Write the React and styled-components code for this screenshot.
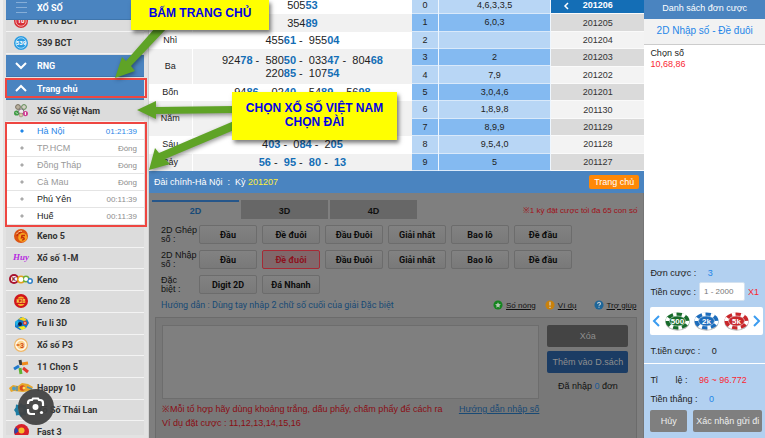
import React from "react";
import styled, { createGlobalStyle } from "styled-components";

const colors = {
  blue: "#4a84c0",
  deepBlue: "#146eb6",
  lightBlue: "#b8d6f5",
  midBlue: "#84baf1",
  panelBlue: "#b2d0f0",
  link: "#1f86e8",
  red: "#fa2732",
  dim: "#7f7f7f",
};

const GlobalStyle = createGlobalStyle`
  * { box-sizing: border-box; }
  body {
    margin: 0;
    background: #ececec;
    color: #222;
    font-family: "Liberation Sans", Arial, sans-serif;
    font-size: 9px;
    overflow: hidden;
  }
  button, input, textarea { font: inherit; margin: 0; }
  a { color: inherit; }
  table { border-collapse: collapse; }
  p, h2, ul { margin: 0; padding: 0; }
`;

const Page = styled.div`
  position: relative;
  display: flex;
  height: 100vh;
  overflow: hidden;
`;

/* ---------- sidebar ---------- */

const Sidebar = styled.nav`
  flex: 0 0 149px;
  padding: 0 4px 3px 6px;
  background: linear-gradient(90deg, #efefef 3px, #e2e2e2 3px);
  border-right: 1px solid #d2d2d2;
  overflow: hidden;
`;

const SidebarBody = styled.div`
  height: 100%;
  overflow: hidden;
`;

const MenuLink = styled.a`
  display: flex;
  align-items: center;
  gap: 5px;
  height: 22px;
  flex-shrink: 0;
  background: #dcdcdc;
  border-bottom: 1px solid #f3f3f3;
  color: #333;
  font-family: Roboto, "Liberation Sans", sans-serif;
  font-size: 9px;
  font-weight: 700;
  text-decoration: none;
  white-space: nowrap;
`;

const GroupLink = styled(MenuLink)`
  margin-top: 1px;
  background: ${colors.blue};
  border-bottom-color: #3f76ad;
  color: #fff;
`;

const HeadLink = styled(GroupLink)`
  height: 20px;
  margin-top: 0;
  padding-bottom: 3px;
`;

const CutRow = styled.div`
  display: flex;
  flex-direction: column;
  justify-content: flex-end;
  height: 12px;
  overflow: hidden;
`;

const IconSlot = styled.span`
  display: flex;
  justify-content: center;
  flex: 0 0 26px;
  min-width: 0;
  padding-left: 4px;

  svg {
    flex-shrink: 0;
    overflow: visible;
  }
`;

const CityList = styled.ul`
  padding: 1px 0;
  background: #fff;
  list-style: none;
`;

const City = styled.li`
  display: flex;
  align-items: center;
  height: 17px;
  padding: 0 7px 0 14px;
  border-bottom: 1px solid #e4e4e4;
  color: ${({ $tone }) => $tone || "#999"};

  a {
    flex: 1;
    margin-left: 13px;
    text-decoration: none;
  }

  time, small {
    font-size: 8px;
    color: ${({ $active }) => ($active ? colors.link : "#8d8d8d")};
  }
`;

const Bullet = styled.i`
  width: 4px;
  height: 4px;
  background: ${({ $active }) => ($active ? colors.link : "#aaa")};
  clip-path: polygon(50% 0, 100% 50%, 50% 100%, 0 50%);
`;

const GameList = styled.div`
  display: grid;
  grid-template-rows: repeat(10, 1fr);
  height: 217px;

  a { height: auto; }
`;

/* ---------- results ---------- */

const Main = styled.main`
  display: flex;
  flex-direction: column;
  flex: 1;
  min-width: 0;
`;

const Results = styled.section`
  display: flex;
  align-items: flex-end;
  height: 171px;
  overflow: hidden;
`;

const PrizeTable = styled.table`
  flex: 1;
  height: 174px;
  background: #fff;
  font-size: 11px;
  line-height: 13px;

  th, td { padding: 0; text-align: center; }
  tr:nth-child(even) { background: #f1f1f1; }
  th {
    width: 43px;
    border-right: 1px solid #fff;
    font-size: 9px;
    font-weight: 400;
  }
  td { white-space: pre; }
  b { color: ${colors.deepBlue}; }
`;

const PrizeRow = styled.tr`
  height: ${({ $tall }) => ($tall ? "34px" : "17px")};
`;

const DigitTable = styled.table`
  width: 139px;
  height: 174px;
  background: ${colors.lightBlue};

  tr:nth-child(even) { background: ${colors.midBlue}; }
  tr { border-bottom: 1px solid #d9e9fa; }
  th, td {
    padding: 0;
    border-right: 1px solid #eef6fe;
    font-weight: 400;
    text-align: center;
  }
  th { width: 26px; }
`;

const DrawList = styled.div`
  display: grid;
  grid-template-rows: repeat(10, 1fr);
  width: 93px;
  height: 174px;
`;

const Draw = styled.button`
  position: relative;
  padding: 0;
  border: 0;
  border-bottom: 1px solid #fafafa;
  background: #f3f3f3;
  color: #333;

  &:nth-child(even) { background: #dadada; }

  &[aria-current] {
    background: ${colors.deepBlue};
    color: #fff;
    font-weight: 700;
  }

  svg {
    position: absolute;
    left: 12px;
    top: 5px;
  }
`;

/* ---------- betting board ---------- */

const GameBar = styled.header`
  display: flex;
  align-items: center;
  justify-content: space-between;
  height: 22px;
  padding: 0 5px;
  background: ${colors.blue};
  color: #fff;
  white-space: pre;

  span { color: #ffee3c; }
`;

const HomeButton = styled.button`
  height: 14px;
  padding: 0 5px;
  border: 0;
  border-radius: 2px;
  background: #ff8806;
  color: #fff;
`;

const Board = styled.section`
  flex: 1;
  display: flex;
  flex-direction: column;
  padding: 7px 3px 0;
  background: ${colors.dim};
  border-right: 1px solid #757575;
  color: #111;
  overflow: hidden;
`;

const Tabs = styled.div`
  display: flex;
  gap: 2px;
  height: 19px;
  align-items: center;

  p {
    margin-left: auto;
    padding-right: 3px;
    color: #a01018;
    font-size: 8px;
    white-space: nowrap;
  }
`;

const Tab = styled.button`
  width: 87px;
  height: 19px;
  padding: 0;
  border: 0;
  border-top: 2px solid ${({ $active }) => ($active ? "#26568a" : "#676767")};
  background: ${({ $active }) => ($active ? colors.dim : "#676767")};
  color: ${({ $active }) => ($active ? "#174a78" : "#111")};
  font-weight: 700;
`;

const BetRows = styled.div`
  display: flex;
  flex-direction: column;
  gap: 6px;
  padding: 6px 9px 0;
`;

const BetRow = styled.div`
  display: flex;
  align-items: center;
  gap: 5px;
  height: 19px;

  span {
    width: 33px;
    line-height: 9px;
    white-space: pre;
  }
`;

const BetButton = styled.button`
  width: 58px;
  height: 19px;
  padding: 0;
  border: 1px solid ${({ $picked }) => ($picked ? "#a52a35" : "#6c6c6c")};
  border-radius: 2px;
  background: ${({ $picked }) =>
    $picked ? "#80686b" : "linear-gradient(#828282, #797979)"};
  color: ${({ $picked }) => ($picked ? "#8c121e" : "#0c0c0c")};
  font-family: Roboto, "Liberation Sans", sans-serif;
  font-weight: 700;
  white-space: nowrap;
`;

const GuideRow = styled.div`
  display: flex;
  align-items: center;
  gap: 9px;
  padding: 0 4px 0 9px;
  height: 22px;
  font-size: 8px;
  white-space: nowrap;

  p {
    flex: 1;
    color: #184a75;
    font-family: Roboto, "Liberation Sans", sans-serif;
    font-size: 9px;
  }

  a:last-child { margin-left: 8px; }
`;

const HelpLink = styled.a`
  display: flex;
  align-items: center;
  gap: 3px;
  color: #111;
`;

const EntryBox = styled.div`
  display: flex;
  flex: 1;
  gap: 8px;
  margin: 1px 3px 0;
  padding: 7px 8px 0 6px;
  border: 1px solid #6b6b6b;
  border-bottom: 0;
  background: #787878;
`;

const EntryColumn = styled.div`
  flex: 1;
  min-width: 0;
`;

const NumberArea = styled.textarea`
  display: block;
  width: 100%;
  height: 74px;
  border: 1px solid #6d6d6d;
  background: ${colors.dim};
  resize: none;
`;

const Hint = styled.div`
  display: flex;
  justify-content: space-between;
  padding-top: 3px;
  line-height: 14px;
  color: #8a0d14;
  white-space: nowrap;

  a { color: #184a75; }
`;

const EntryActions = styled.div`
  display: flex;
  flex-direction: column;
  gap: 4px;
  flex: 0 0 81px;
  text-align: center;

  p { padding-top: 4px; white-space: nowrap; }
  p b { color: #1b5a99; font-weight: 400; }
`;

const ActionButton = styled.button`
  height: 22px;
  padding: 0;
  border: 0;
  border-radius: 2px;
  background: ${({ $primary }) => ($primary ? "#1b3c64" : "#444")};
  color: #8e8e8e;
  white-space: nowrap;
`;

/* ---------- bet slip ---------- */

const Slip = styled.aside`
  display: flex;
  flex-direction: column;
  flex: 0 0 120px;
  background: #fff;
`;

const SlipHead = styled.h2`
  height: 19px;
  background: ${colors.blue};
  color: #fff;
  font-size: 9px;
  font-weight: 400;
  line-height: 17px;
  text-align: center;
  white-space: nowrap;
`;

const SlipTitle = styled.p`
  height: 26px;
  background: #f2f2f2;
  border-bottom: 1px solid #ccc;
  color: ${colors.link};
  font-size: 10px;
  line-height: 24px;
  text-align: center;
  white-space: nowrap;
`;

const SlipBody = styled.div`
  flex: 1;
  padding: 3px 6px;
  line-height: 11px;

  p:last-child { color: ${colors.red}; }
`;

const SlipFoot = styled.form`
  display: flex;
  flex-direction: column;
  height: 178px;
  background: ${colors.panelBlue};
  white-space: pre;
`;

const SlipLine = styled.div`
  display: flex;
  align-items: center;
  gap: ${({ $gap }) => $gap || "9px"};
  height: 19px;
  padding: 0 6px;

  b { color: ${({ $tone }) => $tone || colors.link}; font-weight: 400; }
`;

const RateLine = styled(SlipLine)`
  margin-top: 6px;
`;

const SlipTop = styled.div`
  height: 104px;
  padding-top: 3px;
  border-bottom: 1px solid #fff;
`;

const AmountInput = styled.input`
  width: 46px;
  height: 19px;
  padding: 0 4px;
  border: 1px solid #d4e2f0;
  border-radius: 2px;
  background: #fff;
  font-size: 8px;

  &::placeholder { color: #777; opacity: 1; }
`;

const Chips = styled.div`
  display: flex;
  align-items: center;
  justify-content: space-between;
  height: 28px;
  margin: 6px 2px 6px 6px;
  padding: 0 2px;
  border-radius: 2px;
  background: #fff;
`;

const ChipButton = styled.button`
  display: flex;
  padding: 0;
  border: 0;
  background: none;
`;

const SlipButtons = styled.div`
  display: flex;
  gap: 6px;
  padding: 2px 3px 0 6px;
`;

const SlipButton = styled.button`
  flex: ${({ $wide }) => ($wide ? 1 : "0 0 37px")};
  height: 22px;
  padding: 0;
  border: 0;
  border-radius: 2px;
  background: #7f7f7f;
  color: #eee;
  font-size: 9px;
  white-space: nowrap;
`;

/* ---------- callouts ---------- */

const Callout = styled.div`
  position: absolute;
  left: ${({ $left }) => $left};
  top: ${({ $top }) => $top};
  width: ${({ $width }) => $width};
  padding: ${({ $pad }) => $pad};
  background: #ff0;
  box-shadow: 2px 3px 4px rgba(0, 0, 0, 0.5);
  color: #0202e6;
  font-size: 12px;
  font-weight: 700;
  line-height: 14px;
  text-align: center;
  white-space: nowrap;
`;

const Frame = styled.div`
  position: absolute;
  left: 5px;
  top: ${({ $top }) => $top};
  width: 142px;
  height: ${({ $height }) => $height};
  border: 2px solid #ee4641;
  pointer-events: none;
`;

const Arrows = styled.svg`
  position: absolute;
  left: 0;
  top: 0;
  pointer-events: none;
  filter: drop-shadow(1px 2px 2px rgba(0, 0, 0, 0.4));
`;

const LensButton = styled.button`
  position: absolute;
  left: 18px;
  top: 389px;
  display: grid;
  place-items: center;
  width: 36px;
  height: 36px;
  padding: 0;
  border: 0;
  border-radius: 50%;
  background: rgba(66, 66, 66, 0.94);
`;

/* ---------- icons ---------- */

const Chevron = ({ d, w = 12, h = 7, color = "#fff", stroke = 2 }) => (
  <svg width={w} height={h} viewBox={`0 0 ${w} ${h}`} fill="none" stroke={color} strokeWidth={stroke}>
    <path d={d} />
  </svg>
);

const Ball = ({ fill, ring, label, text = "#fff" }) => (
  <svg width="14" height="14" viewBox="0 0 14 14">
    <circle cx="7" cy="7" r="7" fill={fill} />
    <circle cx="7" cy="7" r="5.2" fill="none" stroke={ring} strokeWidth="1" />
    <text x="7" y="9" textAnchor="middle" fontSize="6" fontWeight="700" fill={text}>{label}</text>
  </svg>
);

const icons = {
  menu: (
    <svg width="11" height="12" viewBox="0 0 11 12" stroke="#86aed8">
      <path d="M0 .5h11M0 5.5h11M0 10.5h11" />
    </svg>
  ),
  pk10: <Ball fill="#d62f35" ring="#f3aaaa" label="10" />,
  b539: <Ball fill="#2b9be0" ring="#9ad6fa" label="539" />,
  vietnam: (
    <svg width="14" height="13" viewBox="0 0 14 13">
      <circle cx="4" cy="3" r="2.4" fill="#b9b09f" stroke="#77705f" />
      <circle cx="10" cy="3" r="2.4" fill="#d4d0c6" stroke="#5d8a54" />
      <circle cx="2.6" cy="9" r="2.6" fill="#3f9b44" />
      <circle cx="7.2" cy="7.5" r="2.6" fill="#eee" stroke="#786d76" />
      <circle cx="11.4" cy="9.6" r="2.6" fill="#cf3e93" />
      <circle cx="7" cy="11" r="1.9" fill="#d8c7a3" stroke="#8b8174" strokeWidth=".6" />
      <path d="M11.4 8v3M2 8.4l1.4 1.4" stroke="#fff" />
    </svg>
  ),
  keno5: (
    <svg width="14" height="14" viewBox="0 0 14 14">
      <circle cx="7" cy="7" r="7" fill="#dc5412" />
      <circle cx="8.6" cy="8.4" r="4.4" fill="#f9a420" />
      <path d="M3 7l1-4h4M5 4.5l3-2M11 6.5H8l-.5 2.2c3-.8 4 2.3.4 2.4" fill="none" stroke="#c62f07" strokeWidth="1.4" />
      <path d="M2.6 5.2c1-2 3-3.4 5.4-3" fill="none" stroke="#ffd89a" />
    </svg>
  ),
  huy: (
    <svg width="16" height="12" viewBox="0 0 16 12">
      <text x="8" y="8" textAnchor="middle" fontFamily="Liberation Serif" fontStyle="italic" fontWeight="700" fontSize="9" fill="#b72ae0">Huy</text>
    </svg>
  ),
  keno: (
    <svg width="24" height="11" viewBox="0 0 24 11">
      <circle cx="5" cy="5" r="5" fill="#a8122e" />
      <circle cx="12" cy="5.5" r="4" fill="#e3a21a" />
      <circle cx="17" cy="5" r="3.6" fill="#6cae35" />
      <circle cx="21" cy="7" r="3" fill="#2b7fc7" />
      <g fill="#fff" fontSize="6" fontWeight="700" textAnchor="middle">
        <circle cx="5" cy="5" r="3" />
        <circle cx="12" cy="5.5" r="2.4" />
        <circle cx="17" cy="5" r="2" />
        <circle cx="21" cy="7" r="1.5" />
        <text x="5" y="7.2" fill="#7a1026">K</text>
      </g>
    </svg>
  ),
  keno28: (
    <svg width="14" height="14" viewBox="0 0 14 14">
      <circle cx="7" cy="7" r="7" fill="#d0161b" />
      <path d="M3.5 4.5a4.2 4.2 0 0 1 7 0zM3.5 10a4.2 4.2 0 0 0 7 0z" fill="#f3b629" />
      <text x="7" y="9.2" textAnchor="middle" fontSize="5" fontWeight="700" fill="#ffe14d">K28</text>
    </svg>
  ),
  fuli: (
    <svg width="15" height="13" viewBox="0 0 15 13">
      <path d="M1 5L7 0l6 2 2 4-3 5-6 2-5-3z" fill="#1478c8" />
      <path d="M4 2l5-2 4 3-3 1z" fill="#f6d51d" />
      <path d="M4 10l4 3 4-2-2-2z" fill="#f4ee1b" />
      <path d="M1 5l3-2 1 3-3 3z" fill="#23b4e6" />
      <circle cx="6" cy="7" r="2" fill="#121a3c" />
      <circle cx="11" cy="6" r="2" fill="#e53b20" />
      <circle cx="11" cy="6" r=".8" fill="#fff" />
    </svg>
  ),
  p3: (
    <svg width="14" height="14" viewBox="0 0 14 14">
      <circle cx="7" cy="7" r="6.4" fill="#fff8ec" stroke="#efb766" strokeWidth="1.2" />
      <circle cx="7" cy="7" r="4.2" fill="#fbd490" />
      <text x="8" y="9.6" textAnchor="middle" fontSize="7" fontWeight="700" fill="#d54a14">3</text>
      <path d="M2.5 7h3" stroke="#dc641c" strokeWidth="1.6" />
    </svg>
  ),
  chon5: (
    <svg width="15" height="14" viewBox="0 0 15 14" strokeWidth="3">
      <path d="M6 0l1 5" stroke="#3b3b3b" />
      <path d="M8 4l6-1" stroke="#f08a1b" />
      <path d="M9 8l5 4" stroke="#e2382e" />
      <path d="M6 8l1 6" stroke="#5cb335" />
      <path d="M0 9l5-3" stroke="#2079cc" />
    </svg>
  ),
  happy: (
    <svg width="25" height="10" viewBox="0 0 25 10">
      <path d="M0 5l4-3 5 1 4-3 6 1 5 3-2 4-8 1-9-1-3 1z" fill="#e7a72c" />
      <circle cx="5" cy="5.5" r="2" fill="#4b9cc9" />
      <circle cx="13.5" cy="5" r="2.8" fill="#d94a1d" />
      <circle cx="15" cy="5" r="1.5" fill="#ffe05c" />
      <path d="M18 4l5 2M8 3v5" stroke="#4d8eb1" strokeWidth="1.4" />
    </svg>
  ),
  thai: (
    <svg width="14" height="14" viewBox="0 0 14 14">
      <path d="M7 0l2 2 3-.5.3 3L14 7l-1.7 2.500-.3 3-3-.5-2 2-2-2-3 .5-.3-3L0 7l1.700-2.500.3-3L5 2z" fill="#1e7da3" />
      <circle cx="7" cy="7" r="2.6" fill="#74bdd5" />
    </svg>
  ),
  fast3: (
    <svg width="15" height="15" viewBox="0 0 15 15">
      <circle cx="7.5" cy="7.5" r="7.5" fill="#d8202b" />
      <path d="M1 10a6.5 6.5 0 0 1 1-7l3 4z" fill="#2c45a9" />
      <circle cx="7.5" cy="6.5" r="3" fill="#f6bb29" />
      <path d="M3 11h9l-2 3H5z" fill="#fff" />
    </svg>
  ),
};

const HelpIcon = ({ fill, children }) => (
  <svg width="10" height="10" viewBox="0 0 11 11">
    <circle cx="5.5" cy="5.5" r="5" fill={fill} />
    {children}
  </svg>
);

const Chip = ({ color, label }) => (
  <svg width="25" height="19" viewBox="0 0 25 19">
    <ellipse cx="12.5" cy="10.5" rx="12" ry="8.3" fill="#bbb" />
    <ellipse cx="12.5" cy="9" rx="12" ry="8.5" fill={color} />
    <ellipse cx="12.5" cy="9" rx="10" ry="6.8" fill="none" stroke="#fff" strokeWidth="4" strokeDasharray="3.5 5.3" />
    <ellipse cx="12.5" cy="9" rx="8" ry="5" fill={color} stroke="#e8eef0" strokeWidth=".6" />
    <text x="12.5" y="11.7" textAnchor="middle" fontSize="8" fontWeight="700" fill="#fff">{label}</text>
  </svg>
);

/* ---------- data ---------- */

const cities = [
  { name: "Hà Nội", time: "01:21:39", tone: colors.link, active: true },
  { name: "TP.HCM" },
  { name: "Đồng Tháp" },
  { name: "Cà Mau" },
  { name: "Phú Yên", time: "00:11:39", tone: "#222" },
  { name: "Huế", time: "00:11:39", tone: "#222" },
];

const games = [
  ["keno5", "Keno 5"],
  ["huy", "Xổ số 1-M"],
  ["keno", "Keno"],
  ["keno28", "Keno 28"],
  ["fuli", "Fu li 3D"],
  ["p3", "Xổ số P3"],
  ["chon5", "11 Chọn 5"],
  ["happy", "Happy 10"],
  ["thai", "Xổ Số Thái Lan"],
  ["fast3", "Fast 3"],
];

const prizes = [
  { label: "", lines: [["50553"]] },
  { label: "", lines: [["35489"]] },
  { label: "Nhì", lines: [["45561", "95504"]] },
  { label: "Ba", lines: [["92478", "58050", "03347", "80468"], ["22085", "10754"]], tall: true },
  { label: "Bốn", lines: [["9486", "0240", "5489", "5698"]] },
  { label: "Năm", lines: [], tall: true },
  { label: "Sáu", lines: [["403", "084", "205"]] },
  { label: "Bảy", lines: [["56", "95", "80", "13"]] },
];

const endings = ["4,6,3,3,5", "6,0,3", "", "2", "7,9", "3,0,4,6", "1,8,9,8", "8,9,9", "9,5,4,0", "5"];

const draws = [
  "201206", "201205", "201204", "201203", "201202",
  "201201", "201130", "201129", "201128", "201127",
];

const fullRow = ["Đầu", "Đề đuôi", "Đầu Đuôi", "Giải nhất", "Bao lô", "Đề đầu"];

const bets = [
  { label: "2D Ghép\nsố :", options: fullRow },
  { label: "2D Nhập\nsố :", options: fullRow, picked: "Đề đuôi" },
  { label: "Đặc\nbiệt :", options: ["Digit 2D", "Đá Nhanh"] },
];

/* ---------- parts ---------- */

function MenuItem({ as: Item = MenuLink, icon, children }) {
  return (
    <Item href="#">
      <IconSlot>{icon}</IconSlot>
      {children}
    </Item>
  );
}

function Menu() {
  return (
    <Sidebar>
      <SidebarBody>
        <MenuItem as={HeadLink} icon={icons.menu}>XỔ SỐ</MenuItem>
        <CutRow>
          <MenuItem icon={icons.pk10}>PK10 BCT</MenuItem>
        </CutRow>
        <MenuItem icon={icons.b539}>539 BCT</MenuItem>
        <MenuItem as={GroupLink} icon={<Chevron d="M1 1l5 5 5-5" />}>RNG</MenuItem>
        <MenuItem as={GroupLink} icon={<Chevron d="M1 6l5-5 5 5" />}>Trang chủ</MenuItem>
        <MenuItem icon={icons.vietnam}>Xổ Số Việt Nam</MenuItem>
        <CityList>
          {cities.map(({ name, time, tone, active }) => (
            <City key={name} $tone={tone} $active={active}>
              <Bullet $active={active} />
              <a href="#">{name}</a>
              {time ? <time>{time}</time> : <small>Đóng</small>}
            </City>
          ))}
        </CityList>
        <GameList>
          {games.map(([icon, name]) => (
            <MenuItem key={name} icon={icons[icon]}>{name}</MenuItem>
          ))}
        </GameList>
      </SidebarBody>
    </Sidebar>
  );
}

// the last two digits of each number are highlighted
function PrizeLine({ numbers }) {
  return (
    <div>
      {numbers.map((n, i) => (
        <React.Fragment key={n}>
          {i > 0 && " -  "}
          {n.slice(0, -2)}
          <b>{n.slice(-2)}</b>
        </React.Fragment>
      ))}
    </div>
  );
}

function DrawResults() {
  return (
    <Results>
      <PrizeTable>
        <tbody>
          {prizes.map(({ label, lines, tall }, i) => (
            <PrizeRow key={i} $tall={tall}>
              <th scope="row">{label}</th>
              <td>{lines.map((numbers, j) => <PrizeLine key={j} numbers={numbers} />)}</td>
            </PrizeRow>
          ))}
        </tbody>
      </PrizeTable>
      <DigitTable>
        <tbody>
          {endings.map((value, digit) => (
            <tr key={digit}>
              <th scope="row">{digit}</th>
              <td>{value}</td>
            </tr>
          ))}
        </tbody>
      </DigitTable>
      <DrawList>
        {draws.map((draw, i) => (
          <Draw key={draw} aria-current={i === 0 ? "true" : undefined}>
            {i === 0 && <Chevron w={6} h={8} d="M5 1L2 4l3 3" stroke={1.5} />}
            {draw}
          </Draw>
        ))}
      </DrawList>
    </Results>
  );
}

function BettingBoard() {
  return (
    <>
      <GameBar>
        <div>Đài chính-Hà Nội  :  Kỳ <span>201207</span></div>
        <HomeButton>Trang chủ</HomeButton>
      </GameBar>
      <Board>
        <Tabs>
          <Tab $active>2D</Tab>
          <Tab>3D</Tab>
          <Tab>4D</Tab>
          <p>※1 kỳ đặt cược tối đa 65 con số</p>
        </Tabs>
        <BetRows>
          {bets.map(({ label, options, picked }) => (
            <BetRow key={label}>
              <span>{label}</span>
              {options.map((option) => (
                <BetButton key={option} $picked={option === picked}>{option}</BetButton>
              ))}
            </BetRow>
          ))}
        </BetRows>
        <GuideRow>
          <p>Hướng dẫn : Dùng tay nhập 2 chữ số cuối của giải Đặc biệt</p>
          <HelpLink href="#">
            <HelpIcon fill="#15851f">
              <path d="M5.5 2.5l1 2 2.1.3-1.6 1.5.4 2.2-1.9-1-1.9 1 .4-2.2-1.6-1.5 2.1-.3z" fill="#b5c8b5" />
            </HelpIcon>
            Số nóng
          </HelpLink>
          <HelpLink href="#">
            <HelpIcon fill="#c9810c">
              <path d="M5.5 2v4M5.5 7.3v1.4" stroke="#d8cfc0" strokeWidth="1.4" />
            </HelpIcon>
            Ví dụ
          </HelpLink>
          <HelpLink href="#">
            <HelpIcon fill="#1d6598">
              <path d="M3.9 4.2c0-2.2 3.3-2 3.3-.1 0 1.2-1.7 1-1.7 2.3M5.5 7.4v1.2" fill="none" stroke="#bccbd6" strokeWidth="1.2" />
            </HelpIcon>
            Trợ giúp
          </HelpLink>
        </GuideRow>
        <EntryBox>
          <EntryColumn>
            <NumberArea aria-label="Chọn số" />
            <Hint>
              <p>
                ※Mỗi tổ hợp hãy dùng khoảng trắng, dấu phẩy, chấm phẩy để cách ra
                <br />
                Ví dụ đặt cược : 11,12,13,14,15,16
              </p>
              <a href="#">Hướng dẫn nhập số</a>
            </Hint>
          </EntryColumn>
          <EntryActions>
            <ActionButton>Xóa</ActionButton>
            <ActionButton $primary>Thêm vào D.sách</ActionButton>
            <p>Đã nhập <b>0</b> đơn</p>
          </EntryActions>
        </EntryBox>
      </Board>
    </>
  );
}

function BetSlip() {
  return (
    <Slip>
      <SlipHead>Danh sách đơn cược</SlipHead>
      <SlipTitle>2D Nhập số - Đề đuôi</SlipTitle>
      <SlipBody>
        <p>Chọn số</p>
        <p>10,68,86</p>
      </SlipBody>
      <SlipFoot onSubmit={(e) => e.preventDefault()}>
        <SlipTop>
          <SlipLine>Đơn cược : <b>3</b></SlipLine>
          <SlipLine $tone={colors.red} $gap="3px">
            <label htmlFor="amount">Tiền cược :</label>
            <AmountInput id="amount" placeholder="1 - 2000" />
            <b>X1</b>
          </SlipLine>
          <Chips>
            <ChipButton type="button" aria-label="Trước">
              <Chevron w={8} h={12} d="M7 1L2 6l5 5" color="#3b9cf0" />
            </ChipButton>
            <ChipButton type="button"><Chip color="#176b2a" label="500" /></ChipButton>
            <ChipButton type="button"><Chip color="#1c6cbc" label="2k" /></ChipButton>
            <ChipButton type="button"><Chip color="#c9272b" label="5k" /></ChipButton>
            <ChipButton type="button" aria-label="Sau">
              <Chevron w={8} h={12} d="M1 1l5 5-5 5" color="#3b9cf0" />
            </ChipButton>
          </Chips>
          <SlipLine $tone="#222">T.tiền cược : <b>0</b></SlipLine>
        </SlipTop>
        <RateLine $tone={colors.red}>Tỉ       lệ : <b>96 ~ 96.772</b></RateLine>
        <SlipLine>Tiền thắng : <b>0</b></SlipLine>
        <SlipButtons>
          <SlipButton type="button">Hủy</SlipButton>
          <SlipButton $wide>Xác nhận gửi đi</SlipButton>
        </SlipButtons>
      </SlipFoot>
    </Slip>
  );
}

function Callouts() {
  return (
    <>
      <Frame $top="78px" $height="20px" />
      <Frame $top="122px" $height="105px" />
      <Arrows width="240" height="180" viewBox="0 0 240 180" fill="#5fa326">
        <path d="M115 78l7-21 4 4 29-33h12l-36 38 4 5z" />
        <path d="M137 110l19-9v6l78-1v7l-78 1v5z" />
        <path d="M149 170l6-22 4 5 75-32v9l-69 29 5 5z" />
      </Arrows>
      <Callout $left="131px" $top="0" $width="138px" $pad="6px 0 10px">BẤM TRANG CHỦ</Callout>
      <Callout $left="232px" $top="92px" $width="165px" $pad="9px 0 11px">
        CHỌN XỔ SỐ VIỆT NAM
        <br />
        CHỌN ĐÀI
      </Callout>
      <LensButton aria-label="Lens">
        <svg width="20" height="20" viewBox="0 0 20 20" fill="none" stroke="#fff" strokeWidth="2.2">
          <path d="M2 7V6a3 3 0 0 1 3-3h1l1-1.5h5L13 3h1a3 3 0 0 1 3 3v3M2 12v2a3 3 0 0 0 3 3h4" />
          <circle cx="9.5" cy="10" r="3" fill="#fff" stroke="none" />
          <circle cx="15.5" cy="15.5" r="1.6" fill="#fff" stroke="none" />
        </svg>
      </LensButton>
    </>
  );
}

export default function App() {
  return (
    <Page>
      <GlobalStyle />
      <Menu />
      <Main>
        <DrawResults />
        <BettingBoard />
      </Main>
      <BetSlip />
      <Callouts />
    </Page>
  );
}
